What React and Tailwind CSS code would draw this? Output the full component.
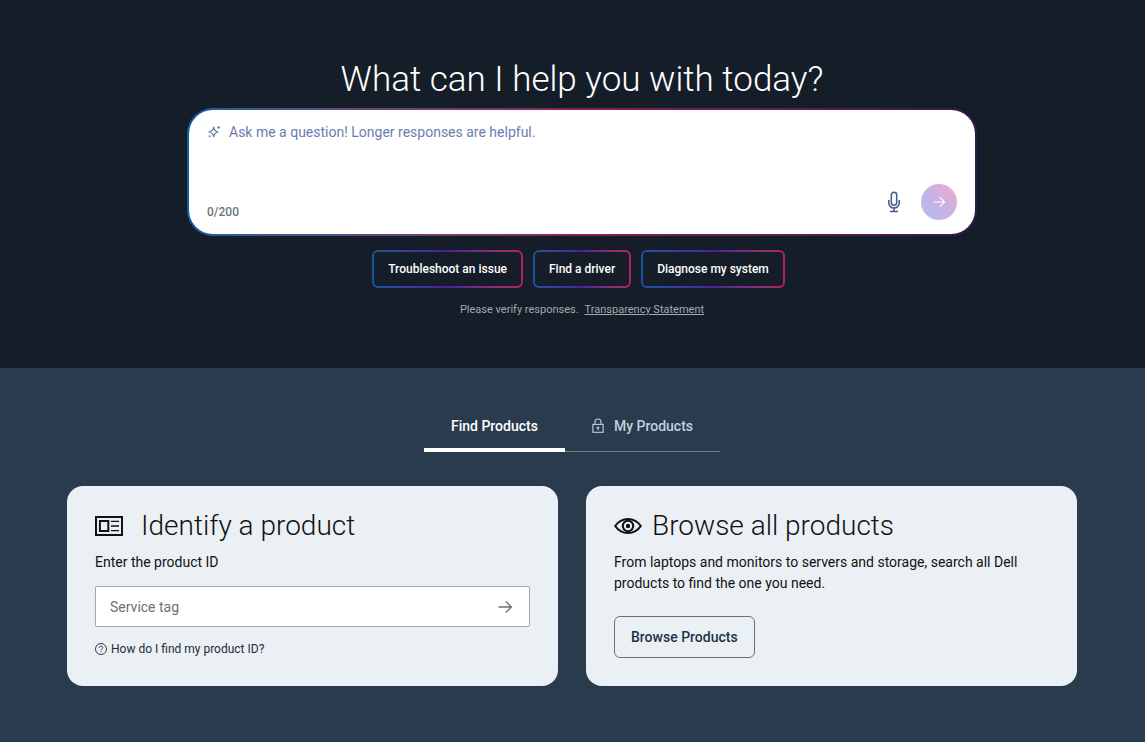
import React, { useState } from 'react';

const MAX_LENGTH = 200;

const suggestions = ['Troubleshoot an issue', 'Find a driver', 'Diagnose my system'];

const SparkleIcon = () => (
  <svg className="w-3.5 h-3.5" viewBox="0 0 14 14" fill="none" stroke="currentColor" strokeWidth="1.2" strokeLinejoin="round">
    <path d="M6.8 2.2C7.1 5.2 8.2 6.4 11 7C8.2 7.6 7.1 8.8 6.8 11.8C6.1 8.8 5 7.6 2 7C5 6.4 6.1 5.2 6.8 2.2Z" />
    <path d="M11.6 1.6V3.4M10.7 2.5H12.5" strokeLinecap="round" />
    <circle cx="2.6" cy="11.2" r="0.4" />
  </svg>
);

const MicIcon = () => (
  <svg className="w-3.5 h-[22px]" viewBox="0 0 14 22" fill="none" stroke="currentColor" strokeWidth="1.5">
    <rect x="4.3" y="1.2" width="5.4" height="13" rx="2.7" />
    <path d="M1.8 9V12.2A5.2 4.8 0 0 0 12.2 12.2V9M7 17V20.4M3 20.6H11" />
  </svg>
);

const ArrowIcon = ({ className }) => (
  <svg className={className} viewBox="0 0 16 16" fill="none" stroke="currentColor" strokeWidth="1.3">
    <path d="M1.5 8H14.2M8.8 2.5L14.4 8L8.8 13.5" />
  </svg>
);

const LockIcon = () => (
  <svg className="w-3 h-4" viewBox="0 0 12 16" fill="none" stroke="currentColor" strokeWidth="1.1">
    <rect x="0.9" y="6.4" width="10.2" height="7.9" />
    <path d="M3 6.4V4A3 3 0 0 1 9 4V6.4" />
    <path d="M4.6 9H7.4L6 11Z" fill="currentColor" strokeWidth="0.4" />
    <path d="M6 9.5V12.2" />
  </svg>
);

const CardIcon = () => (
  <svg className="w-7 h-5" viewBox="0 0 28 20" fill="none" stroke="currentColor">
    <rect x="1" y="1" width="26" height="18" strokeWidth="2" />
    <rect x="4.9" y="5" width="8.4" height="10" strokeWidth="2" />
    <path d="M16 5.3H24M16 10H24M16 14.7H24" strokeWidth="1.3" />
  </svg>
);

const EyeIcon = () => (
  <svg className="w-7 h-5" viewBox="0 0 28 20" fill="none" stroke="currentColor">
    <path d="M1.2 10C7.5 0.6 20.5 0.6 26.8 10C20.5 19.4 7.5 19.4 1.2 10Z" strokeWidth="2.1" />
    <circle cx="14" cy="10" r="5.2" strokeWidth="2.1" />
    <circle cx="14" cy="10" r="2.2" fill="currentColor" stroke="none" />
  </svg>
);

const HelpIcon = () => (
  <svg className="w-3 h-3" viewBox="0 0 12 12" fill="none" stroke="currentColor" strokeWidth="0.9">
    <circle cx="6" cy="6" r="5.5" />
    <path d="M4.2 4.9C4.2 2.6 7.8 2.6 7.8 4.7C7.8 6 6 5.9 6 7.3" />
    <path d="M6 8.3V9.3" />
  </svg>
);

const Assistant = () => {
  const [question, setQuestion] = useState('');

  return (
    <section className="bg-[#151d28] pl-[19px] pt-14 pb-[50px] flex flex-col items-center">
      <h1 className="text-[35px] leading-12 font-light text-white">What can I help you with today?</h1>

      <form
        onSubmit={(e) => e.preventDefault()}
        className="mt-1 w-full max-w-[790px] rounded-[26px] p-0.5 bg-linear-to-r from-[#0b5da6] via-[#8a1f4e] to-[#35184f]"
      >
        <div className="rounded-3xl bg-white py-3 px-[18px]">
          <div className="flex items-start gap-2 text-[#6478ae]">
            <span className="pt-[3px]"><SparkleIcon /></span>
            <textarea
              aria-label="Ask me a question"
              value={question}
              maxLength={MAX_LENGTH}
              onChange={(e) => setQuestion(e.target.value)}
              placeholder="Ask me a question! Longer responses are helpful."
              className="flex-1 h-[62px] resize-none outline-none text-sm leading-5 text-gray-800 placeholder:text-[#6b7db0]"
            />
          </div>
          <div className="flex items-end justify-between">
            <span className="text-xs leading-5 font-medium text-[#6e7379]">{question.length}/{MAX_LENGTH}</span>
            <div className="pb-0.5 flex items-center gap-5">
              <button type="button" aria-label="Dictate" className="text-[#44598c]"><MicIcon /></button>
              <button
                type="submit"
                aria-label="Send"
                className="w-9 h-9 rounded-full flex items-center justify-center text-white bg-linear-to-tr from-[#b0bdf5] via-[#c8b1e5] to-[#f2acc4]"
              >
                <ArrowIcon className="w-3.5 h-3.5" />
              </button>
            </div>
          </div>
        </div>
      </form>

      <div className="mt-3.5 pr-[7px] flex flex-wrap justify-center gap-2.5">
        {suggestions.map((label) => (
          <button
            key={label}
            type="button"
            onClick={() => setQuestion(label)}
            className="rounded-md p-0.5 bg-linear-to-r from-[#17539c] via-[#4a1f98] to-[#b31f5c]"
          >
            <span className="block rounded-sm bg-[#151d28] px-3.5 py-2 text-xs leading-[18px] font-medium text-white">{label}</span>
          </button>
        ))}
      </div>

      <p className="mt-3.5 text-[11px] leading-4 text-[#a3a9b1]">
        Please verify responses.
        <a href="#transparency" className="ml-1.5 underline">Transparency Statement</a>
      </p>
    </section>
  );
};

const Products = () => {
  const [tab, setTab] = useState('find');

  return (
    <section className="flex-1 pl-[67px] pr-[68px] pt-9 pb-14">
      <div role="tablist" className="mx-auto w-fit flex text-sm leading-5 font-medium">
        <button
          type="button"
          role="tab"
          aria-selected={tab === 'find'}
          onClick={() => setTab('find')}
          className="h-12 px-[27px] border-b-4 border-white text-white"
        >
          Find Products
        </button>
        <button
          type="button"
          role="tab"
          aria-selected={tab === 'mine'}
          onClick={() => setTab('mine')}
          className="h-12 px-[27px] pb-[3px] border-b border-[#71808e] text-[#c0cfe0] flex items-center gap-2.5"
        >
          <LockIcon />
          My Products
        </button>
      </div>

      <div className="mt-[34px] grid grid-cols-1 md:grid-cols-2 gap-7 text-[#101214]">
        <div className="rounded-2xl bg-[#ebf0f5] px-7 pt-5 pb-6">
          <h2 className="flex items-center gap-[18px] text-[28px] leading-10 font-light">
            <CardIcon />
            Identify a product
          </h2>
          <label htmlFor="service-tag" className="mt-1.5 block text-sm leading-5">Enter the product ID</label>
          <form
            onSubmit={(e) => e.preventDefault()}
            className="mt-3.5 h-[41px] flex items-center rounded-xs border border-[#a3a8ad] bg-white"
          >
            <input
              id="service-tag"
              type="text"
              placeholder="Service tag"
              className="flex-1 min-w-0 h-full px-3.5 outline-none text-sm placeholder:text-[#6e7073]"
            />
            <button type="submit" aria-label="Search" className="px-4 text-[#6b6e73]">
              <ArrowIcon className="w-4 h-4" />
            </button>
          </form>
          <a href="#product-id" className="mt-3 w-fit flex items-center gap-1 text-xs leading-5 text-[#1d2c3b]">
            <HelpIcon />
            How do I find my product ID?
          </a>
        </div>

        <div className="rounded-2xl bg-[#ebf0f5] px-7 pt-5 pb-7">
          <h2 className="flex items-center gap-2.5 text-[28px] leading-10 font-light">
            <EyeIcon />
            Browse all products
          </h2>
          <p className="mt-1.5 text-sm leading-[21px]">
            From laptops and monitors to servers and storage, search all Dell products to find the one you need.
          </p>
          <button
            type="button"
            className="mt-[22px] h-[42px] px-4 rounded-md border border-[#66727f] text-sm font-medium text-[#1d3347]"
          >
            Browse Products
          </button>
        </div>
      </div>
    </section>
  );
};

const App = () => (
  <main className="min-h-screen flex flex-col bg-[#293b4d] font-[Roboto,sans-serif]">
    <Assistant />
    <Products />
  </main>
);

export default App;
